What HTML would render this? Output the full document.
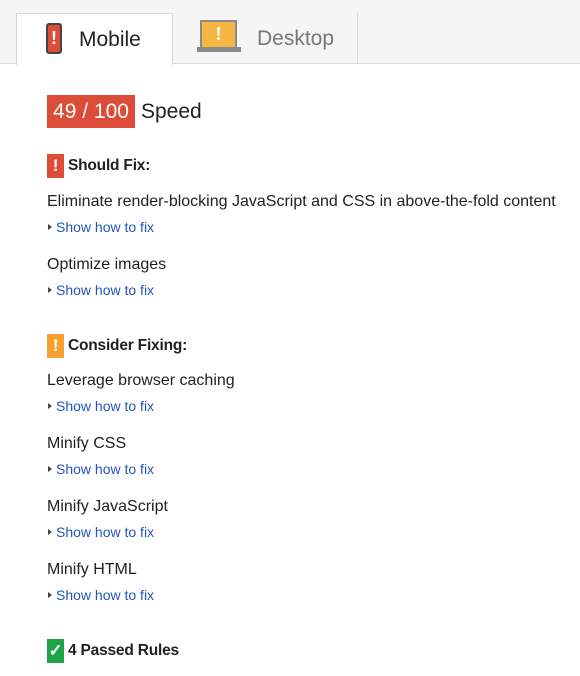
<!DOCTYPE html>
<html><head><meta charset="utf-8"><style>
*{margin:0;padding:0;box-sizing:border-box}
body{width:580px;height:676px;background:#fff;font-family:"Liberation Sans",Arial,sans-serif;color:#212121;position:relative;overflow:hidden}
.bar{position:absolute;left:0;top:0;width:580px;height:64px;background:#f5f5f5;border-bottom:1px solid #d9d9d9}
.tab{position:absolute;top:13px;height:51px;font-size:21px}
.t1{left:16px;width:157px;background:#fff;border:1px solid #d9d9d9;border-bottom:none;height:52px}
.t2{left:173px;width:185px;border-right:1px solid #d9d9d9;color:#777}
.a{position:absolute;left:47px;white-space:nowrap}
.t{font-size:16px}
.s{font-size:14px;color:#2255bb;padding-left:9px}
.s:before{content:"";position:absolute;left:1px;top:5px;border-left:4px solid #444;border-top:3.5px solid transparent;border-bottom:3.5px solid transparent}
.h{font-size:15.5px;font-weight:bold;padding-left:21px;letter-spacing:-0.2px}
.ic{position:absolute;left:0;top:-3px;width:17px;height:24px;color:#fff;font-weight:bold;text-align:center;line-height:24px;font-size:17px}
</style></head><body>
<div class="bar"></div>
<div class="tab t1">
<div style="position:absolute;left:29px;top:9px;width:16px;height:31px;background:#dd4b39;border:2px solid #444;border-radius:3px;color:#fff;font-weight:bold;text-align:center;line-height:27px;font-size:18px">!</div>
<span style="position:absolute;left:62px;top:14px">Mobile</span></div>
<div class="tab t2">
<div style="position:absolute;left:27px;top:7px;width:37px;height:27px;background:#f6b642;border:2px solid #8a8a8a;border-bottom:none;color:#fff;text-align:center;font-weight:bold;font-size:18px;line-height:24px">!</div>
<div style="position:absolute;left:24px;top:34px;width:44px;height:5px;background:#8a8a8a"></div>
<span style="position:absolute;left:84px;top:14px">Desktop</span></div>

<div class="a" style="top:95px;height:33px;width:88px;background:#dd4b39;color:#fff;font-size:21px;line-height:33px;text-align:center">49 / 100</div>
<div class="a" style="left:141px;top:100px;font-size:21px">Speed</div>

<div class="a h" style="top:157px"><span class="ic" style="background:#dd4b39">!</span>Should Fix:</div>
<div class="a t" style="top:193px">Eliminate render-blocking JavaScript and CSS in above-the-fold content</div>
<div class="a s" style="top:219px">Show how to fix</div>
<div class="a t" style="top:256px">Optimize images</div>
<div class="a s" style="top:282px">Show how to fix</div>

<div class="a h" style="top:337px"><span class="ic" style="background:#f6a030">!</span>Consider Fixing:</div>
<div class="a t" style="top:372px">Leverage browser caching</div>
<div class="a s" style="top:398px">Show how to fix</div>
<div class="a t" style="top:435px">Minify CSS</div>
<div class="a s" style="top:461px">Show how to fix</div>
<div class="a t" style="top:498px">Minify JavaScript</div>
<div class="a s" style="top:524px">Show how to fix</div>
<div class="a t" style="top:561px">Minify HTML</div>
<div class="a s" style="top:587px">Show how to fix</div>

<div class="a h" style="top:642px"><span class="ic" style="background:#1ea446">✓</span>4 Passed Rules</div>
</body></html>
